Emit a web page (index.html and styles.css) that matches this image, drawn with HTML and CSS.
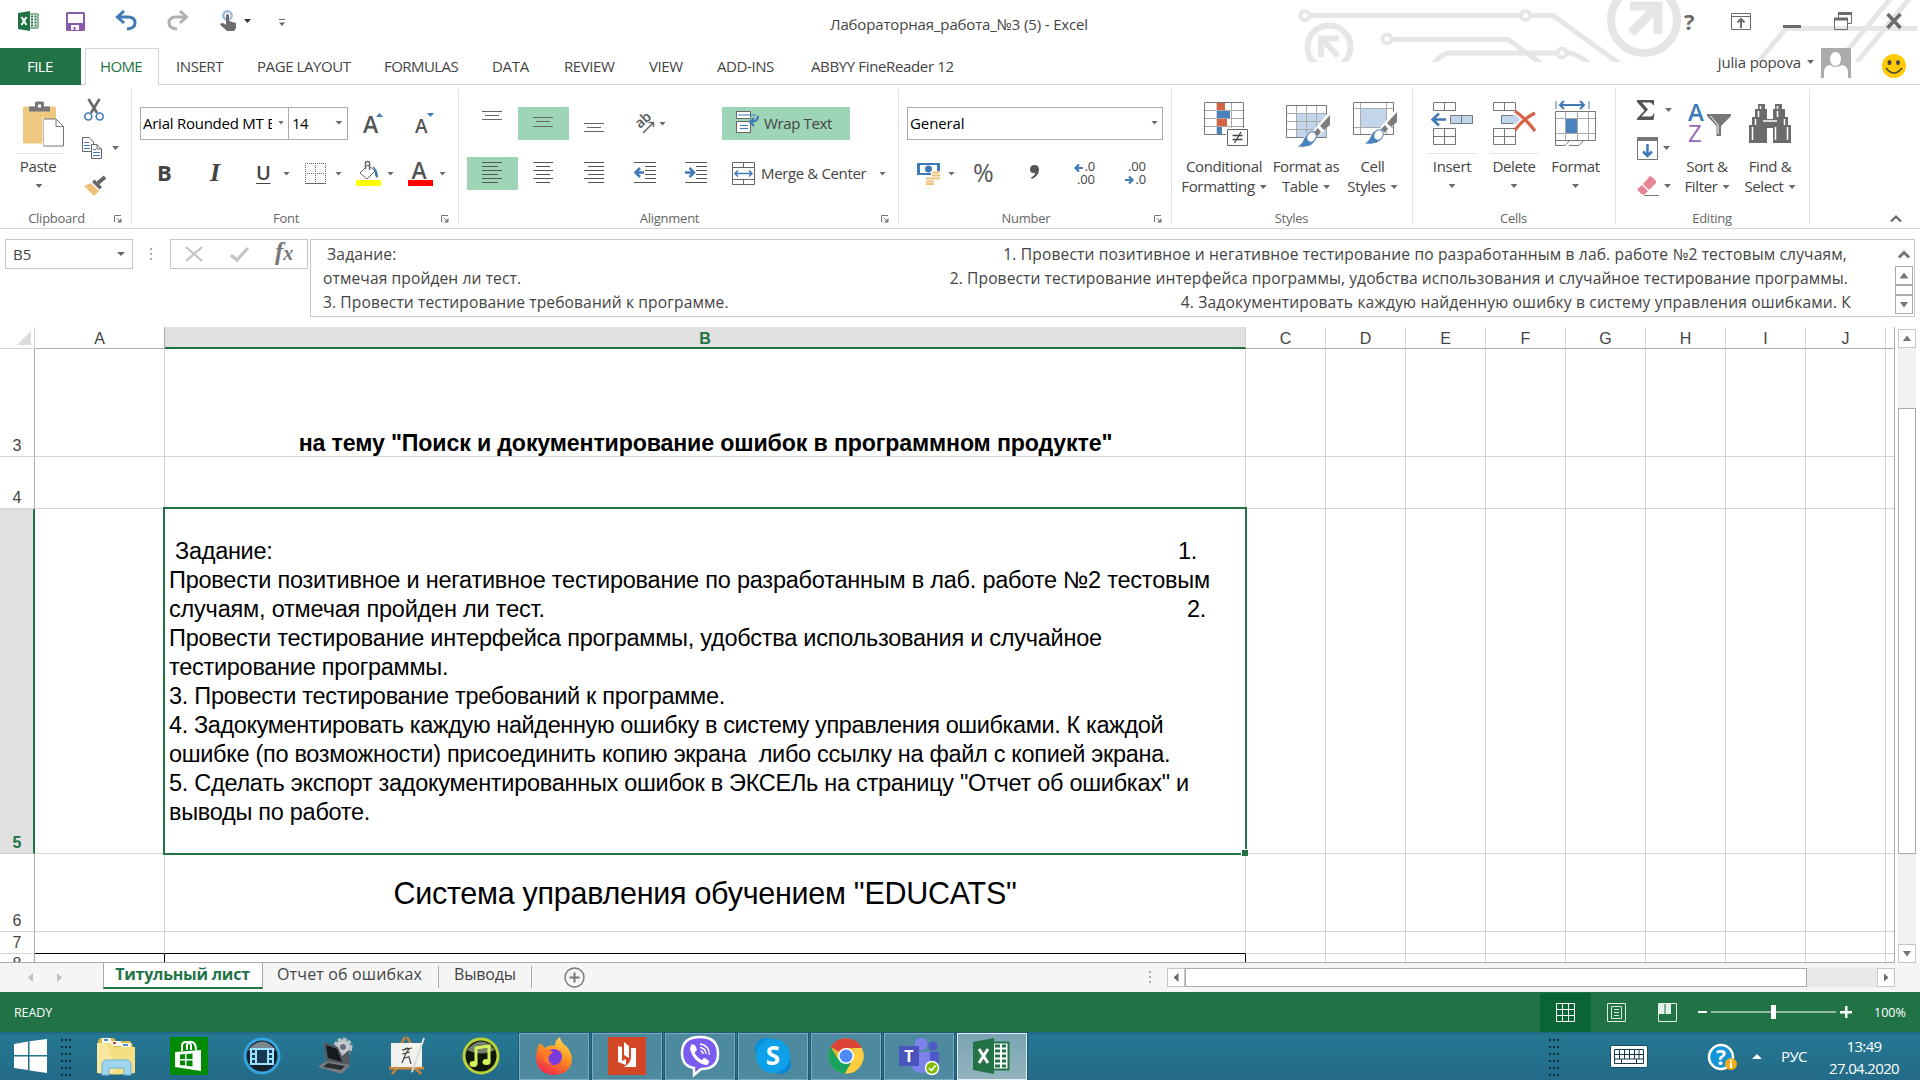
FILE: index.html
```
<!DOCTYPE html>
<html lang="ru">
<head>
<meta charset="utf-8">
<title>Лабораторная_работа_№3 (5) - Excel</title>
<link rel="stylesheet" href="styles.css">
</head>
<body>
<div class="app">

<header class="titlebar">
  <svg class="circuit" width="625" height="62" viewBox="1295 0 625 62" fill="none" stroke="#e6e6e6" stroke-width="5">
    <circle cx="1305" cy="15.500" r="4.500" stroke-width="4"/><path d="M1310 15.500H1520M1531 15.500H1553L1620 64"/>
    <circle cx="1525.500" cy="15.500" r="4.500" stroke-width="4"/>
    <circle cx="1329" cy="47" r="21.500" stroke-width="6"/><path d="M1321 57V38.500H1339M1321 38L1338 56" stroke-width="6"/>
    <circle cx="1387" cy="39" r="4.500" stroke-width="4"/><path d="M1392 39.500H1508L1542 64M1433 64Q1442 53 1450 53H1557M1567 53Q1575 52 1590 64"/>
    <circle cx="1562" cy="53" r="4.500" stroke-width="4"/>
    <circle cx="1644" cy="20" r="33" stroke-width="8"/><path d="M1630 6H1658V34M1657 7L1631 33" stroke-width="9"/>
    <path d="M1758 62L1786 28.500H1917M1891 -2L1846 52M1910 -2L1857 62"/>
  </svg>
  <div class="quick">
    <svg width="20" height="20" viewBox="0 0 20 20"><path d="M11 3h9v14h-9z" fill="#fff" stroke="#217346"/><path d="M13 5.500h2M16.500 5.500h2M13 8.500h2M16.500 8.500h2M13 11.500h2M16.500 11.500h2M13 14.500h2M16.500 14.500h2" stroke="#217346" stroke-width="2"/><path d="M0 2L12 0V20L0 18z" fill="#217346"/><path d="M3.500 6L8.500 14M8.500 6L3.500 14" stroke="#fff" stroke-width="2"/></svg>
    <svg width="19" height="19" viewBox="0 0 19 19"><path d="M0 1.500Q0 0 1.500 0H17.500Q19 0 19 1.500V17.500Q19 19 17.500 19H1.500Q0 19 0 17.500z" fill="#8a5aab"/><path d="M2 2h15v9h-15z" fill="#fff"/><path d="M5 13h8v5h-3.500v-3h-2v3H5z" fill="#fff"/></svg>
    <svg width="22" height="20" viewBox="0 0 22 20" fill="none" stroke="#4079b8" stroke-width="3"><path d="M2 6H13Q20 6 20 12Q20 17.500 12 18"/><path d="M9 0L2.500 6L9 12" stroke-width="3"/></svg>
    <svg width="22" height="20" viewBox="0 0 22 20" fill="none" stroke="#b1b1b1" stroke-width="3"><path d="M20 6H9Q2 6 2 12Q2 17.500 10 18"/><path d="M13 0L19.500 6L13 12"/></svg>
    <svg width="18" height="22" viewBox="0 0 18 22"><circle cx="7.500" cy="5.500" r="4.200" fill="none" stroke="#9dbbdc" stroke-width="2.500"/><path d="M6 5Q7.500 3 9 5V11L16 13V18L14 21H7L0 14.500Q1 12 4 13.500L6 15z" fill="#6b6b6b"/></svg>
    <i class="dd dark"></i>
    <svg width="6" height="7" viewBox="0 0 6 7"><path d="M0 .5h6" stroke="#666"/><path d="M0 3.500h6L3 7z" fill="#666"/></svg>
  </div>
  <div class="doc-title">Лабораторная_работа_№3 (5) - Excel</div>
  <div class="win-buttons">
    <span class="help">?</span>
    <svg width="20" height="17" viewBox="0 0 20 17" fill="none" stroke="#6b6b6b"><path d="M.5.5h19v16H.5zM.5 3.500h19"/><path d="M10 15V6M6.500 9.500L10 6L13.500 9.500" stroke-width="2"/></svg>
    <svg width="18" height="3" viewBox="0 0 18 3"><path d="M0 0h18v3H0z" fill="#6b6b6b"/></svg>
    <svg width="18" height="18" viewBox="0 0 18 18" fill="none" stroke="#6b6b6b"><path d="M4.500 6V1.500H17.500V11.500H13.500M.5 6.500h13v11H.5z"/><path d="M4 1.500h14M0 7h14" stroke-width="3"/></svg>
    <svg width="16" height="16" viewBox="0 0 16 16" stroke="#6b6b6b" stroke-width="3.500"><path d="M1.500 1L14.500 15M14.500 1L1.500 15"/></svg>
  </div>
</header>

<nav class="tabs">
  <span class="tab file">FILE</span>
  <span class="tab active">HOME</span>
  <span class="tab t-insert">INSERT</span>
  <span class="tab t-page">PAGE LAYOUT</span>
  <span class="tab t-form">FORMULAS</span>
  <span class="tab t-data">DATA</span>
  <span class="tab t-rev">REVIEW</span>
  <span class="tab t-view">VIEW</span>
  <span class="tab t-add">ADD-INS</span>
  <span class="tab t-abbyy">ABBYY FineReader 12</span>
  <div class="account">
    <span>julia popova</span><i class="dd"></i>
    <svg width="30" height="30" viewBox="0 0 30 30"><path d="M0 0h30v30H0z" fill="#ababab"/><path d="M3 30V24Q3 18 9 17Q12 19 15 19Q18 19 21 17Q27 18 27 24V30z" fill="#fff"/><ellipse cx="14.500" cy="11" rx="6" ry="7.500" fill="#fff" stroke="#ababab"/></svg>
    <svg class="smile" width="24" height="24" viewBox="0 0 24 24"><circle cx="12" cy="12" r="12" fill="#ffcb05"/><ellipse cx="7.500" cy="8.500" rx="2" ry="2.500" fill="#444"/><ellipse cx="16" cy="8.500" rx="2" ry="2.500" fill="#444"/><path d="M4 14Q12 24 20 14" fill="none" stroke="#444" stroke-width="1.500"/></svg>
  </div>
</nav>

<section class="ribbon">
  <div class="group g-clip">
    <div class="body">
      <div class="big paste">
        <svg width="41" height="45" viewBox="0 0 41 45"><rect y="5" width="33" height="37" rx="1.500" fill="#edc87e"/><path d="M6 5H12V1.500Q12 0 13.500 0H19.500Q21 0 21 1.500V5H27V10H6z" fill="#777"/><path d="M15 3h3v3h-3z" fill="#fff"/><path d="M20.500 17.500H33L40.500 25V44.500H20.500z" fill="#fff" stroke="#777"/><path d="M19 16h1v29" stroke="#fff" fill="none"/><path d="M33 17.500V25H40.500" fill="none" stroke="#777"/></svg>
        <hr><span>Paste</span><i class="dd"></i>
      </div>
      <div class="tri-rows">
        <div><svg width="20" height="22" viewBox="0 0 20 22"><path d="M4.500 0L13 14M15.500 0L7 14" stroke="#666" stroke-width="2.500"/><circle cx="4.300" cy="17.500" r="3.500" fill="#fff" stroke="#4079b8" stroke-width="1.600"/><circle cx="15.700" cy="17.500" r="3.500" fill="#fff" stroke="#4079b8" stroke-width="1.600"/></svg></div>
        <div class="copy"><svg width="20" height="22" viewBox="0 0 20 22" fill="#fff" stroke="#666"><path d="M.5.5H7L11.500 5V14.500H.5z"/><path d="M2 5.500h5M2 8.500h6M2 11.500h6" stroke="#4079b8"/><path d="M9.500 7.500H15L19.500 12V21.500H9.500zM15 7.500V12H19.500"/><path d="M11 12.500h3M11 15.500h7M11 18.500h7" stroke="#4079b8"/></svg><i class="dd"></i></div>
        <div><svg width="23" height="20" viewBox="0 0 23 20"><path d="M0 10L7 7L15 15L10 20z" fill="#edc17c"/><path d="M8 6L10.500 3.500L18 11L15.500 13.500z" fill="#666"/><path d="M14 7L21 1" stroke="#666" stroke-width="4"/></svg></div>
      </div>
    </div>
    <div class="label"><span class="lt">Clipboard</span><svg class="launch" width="8" height="8" viewBox="0 0 8 8"><path d="M.5 7V.5H7M3 3L6 6" fill="none" stroke="#777"/><path d="M7.500 3v4.500H3z" fill="#777"/></svg></div>
  </div>

  <div class="group g-font">
    <div class="body rows">
      <div class="row1">
        <div class="combo c-name"><span class="fn">Arial Rounded MT Bold</span><i class="dd"></i></div>
        <div class="combo c-size"><span>14</span><i class="dd"></i></div>
        <svg width="20" height="22" viewBox="0 0 20 22"><text x="0" y="20" class="glyph" font-size="23">A</text><path d="M13 4L16.500 0L20 4z" fill="#4079b8"/></svg>
        <svg width="20" height="22" viewBox="0 0 20 22"><text x="0" y="20" class="glyph" font-size="19">A</text><path d="M12 0H19L15.500 4z" fill="#4079b8"/></svg>
      </div>
      <div class="row2">
        <b class="fb">B</b><i class="fi">I</i><span class="fu">U</span><i class="dd"></i>
        <svg width="22" height="22" viewBox="0 0 22 22" stroke="#666" fill="none"><path d="M.5 0V20M10.500 0V20M20.500 0V20M0 .5H21M0 10.500H21" stroke-dasharray="1 1"/><path d="M0 20.500h21"/></svg><i class="dd"></i>
        <svg width="25" height="25" viewBox="0 0 25 25"><path d="M4 12L12 4L19 10L11 18z" fill="#fff" stroke="#666"/><path d="M9.500 8V1.500Q9.500.5 11 .5H12Q13.500.5 13.500 2V9" fill="none" stroke="#666" stroke-width="1.500"/><path d="M16 5Q22 7 22 17Q18 16 19 10z" fill="#4079b8"/><path d="M0 19h25v6H0z" fill="#ff0"/></svg><i class="dd"></i>
        <svg width="25" height="25" viewBox="0 0 25 25"><text x="3.500" y="18" class="glyph" font-size="23">A</text><path d="M0 19h25v6H0z" fill="red"/></svg><i class="dd"></i>
      </div>
    </div>
    <div class="label"><span class="lt">Font</span><svg class="launch" width="8" height="8" viewBox="0 0 8 8"><path d="M.5 7V.5H7M3 3L6 6" fill="none" stroke="#777"/><path d="M7.500 3v4.500H3z" fill="#777"/></svg></div>
  </div>

  <div class="group g-align">
    <div class="body rows">
      <div class="row1">
        <span class="tg"><svg width="20" height="28" viewBox="0 0 20 28" stroke="#666"><path d="M0 2.500h20M3 6.500h14M0 10.500h20"/></svg></span>
        <span class="tg on"><svg width="20" height="28" viewBox="0 0 20 28" stroke="#666"><path d="M0 8.500h20M3 12.500h14M0 17.500h20"/></svg></span>
        <span class="tg"><svg width="20" height="28" viewBox="0 0 20 28" stroke="#666"><path d="M0 14.500h20M3 18.500h14M0 22.500h20"/></svg></span>
        <svg class="orient" width="20" height="20" viewBox="0 0 20 20"><text transform="translate(5 15) rotate(-42)" class="glyph" font-size="14">ab</text><path d="M8 19L18 9M13.500 8.500H18.500V13" fill="none" stroke="#666" stroke-width="1.500"/></svg><i class="dd"></i>
        <span class="wrap"><svg width="23" height="23" viewBox="0 0 23 23"><path d="M.5.5h14v7H.5zM.5 10.500h14v11H.5z" fill="#fff" stroke="#666"/><path d="M2 4H20M4 14.500h8M4 17.500h8" stroke="#4079b8"/><path d="M22 5Q22 11 14 11M18 7L14 11L18 15" fill="none" stroke="#4079b8" stroke-width="2.200"/></svg>Wrap Text</span>
      </div>
      <div class="row2">
        <span class="tg on"><svg width="20" height="22" viewBox="0 0 20 22" stroke="#555"><path d="M0 .5h20M0 4.500h16M0 8.500h20M0 12.500h16M0 16.500h20M0 20.500h16"/></svg></span>
        <span class="tg"><svg width="20" height="22" viewBox="0 0 20 22" stroke="#555"><path d="M0 .5h20M3 4.500h14M0 8.500h20M3 12.500h14M0 16.500h20M3 20.500h14"/></svg></span>
        <span class="tg"><svg width="20" height="22" viewBox="0 0 20 22" stroke="#555"><path d="M0 .5h20M4 4.500h16M0 8.500h20M4 12.500h16M0 16.500h20M4 20.500h16"/></svg></span>
        <span class="tg"><svg width="22" height="22" viewBox="0 0 22 22" stroke="#555"><path d="M0 .5h22M11 4.500h11M11 8.500h11M11 12.500h11M11 16.500h11M0 20.500h22"/><path d="M10 10.500H2M6 6L1.500 10.500L6 15" stroke="#4079b8" stroke-width="2.500" fill="none"/></svg></span>
        <span class="tg"><svg width="22" height="22" viewBox="0 0 22 22" stroke="#555"><path d="M0 .5h22M11 4.500h11M11 8.500h11M11 12.500h11M11 16.500h11M0 20.500h22"/><path d="M0 10.500H8M4.500 6L9 10.500L4.500 15" stroke="#4079b8" stroke-width="2.500" fill="none"/></svg></span>
        <svg class="merge" width="23" height="23" viewBox="0 0 23 23" fill="#fff" stroke="#666"><path d="M.5.500h22v22H.5zM.5 5.500h22M.5 17.500h22M11.500.500v5M11.500 17.500v5"/><path d="M3 11.500H20M6 8.500L3 11.500L6 14.500M17 8.500L20 11.500L17 14.500" fill="none" stroke="#4079b8" stroke-width="1.500"/></svg>
        <span>Merge &amp; Center</span><i class="dd"></i>
      </div>
    </div>
    <div class="label"><span class="lt">Alignment</span><svg class="launch" width="8" height="8" viewBox="0 0 8 8"><path d="M.5 7V.5H7M3 3L6 6" fill="none" stroke="#777"/><path d="M7.500 3v4.500H3z" fill="#777"/></svg></div>
  </div>

  <div class="group g-num">
    <div class="body rows">
      <div class="row1"><div class="combo c-num"><span>General</span><i class="dd"></i></div></div>
      <div class="row2">
        <svg width="23" height="23" viewBox="0 0 23 23"><path d="M0 1h23v12H0z" fill="#4079b8"/><path d="M3 3h17v8H3z" fill="#fff"/><circle cx="11.500" cy="7" r="3.500" fill="#4079b8"/><path d="M14 9h9v9h-6v5H8v-8h6z" fill="#fff"/><path d="M15 10.500h8M15 13.500h8M15 16.500h8M9 16.500h8M9 19.500h8M9 22h8" stroke="#edc17c" stroke-width="2"/></svg><i class="dd"></i>
        <svg width="22" height="22" viewBox="0 0 22 22"><text x="0" y="19" class="glyph pct" font-size="25">%</text></svg>
        <svg width="9" height="14" viewBox="0 0 9 14"><path d="M4.500 0Q9 0 9 5Q8.500 11 2 14L1 12.500Q5 10.500 5 8Q0 8.500 0 4.500Q0 0 4.500 0z" fill="#555"/></svg>
        <svg width="23" height="23" viewBox="0 0 23 23"><text x="10.500" y="9" class="dec">.0</text><text x="3" y="22" class="dec">.00</text><path d="M9 6H2M5 2.500L1.500 6L5 9.500" fill="none" stroke="#4079b8" stroke-width="2.200"/></svg>
        <svg width="23" height="23" viewBox="0 0 23 23"><text x="3" y="9" class="dec">.00</text><text x="10.500" y="22" class="dec">.0</text><path d="M0 18H7M4 14.500L7.500 18L4 21.500" fill="none" stroke="#4079b8" stroke-width="2.200"/></svg>
      </div>
    </div>
    <div class="label"><span class="lt">Number</span><svg class="launch" width="8" height="8" viewBox="0 0 8 8"><path d="M.5 7V.5H7M3 3L6 6" fill="none" stroke="#777"/><path d="M7.500 3v4.500H3z" fill="#777"/></svg></div>
  </div>

  <div class="group g-styles">
    <div class="body">
      <div class="big w-cond"><svg width="44" height="44" viewBox="0 0 44 44"><path d="M.5.500h39v32H.5z" fill="#fff" stroke="#777"/><path d="M13 1V32M27.500 1V32M1 8.500H39M1 16.500H39M1 24.500H39" stroke="#aaa"/><path d="M13 1h8v7h-8zM13 17h10v7H13z" fill="#d86344"/><path d="M13 9h13v7H13zM13 25h5v7h-5z" fill="#4a82bd"/><path d="M22 26h22v18H22z" fill="#fff"/><path d="M23.500 27.500h20v16h-20z" fill="#fff" stroke="#666"/><path d="M28.500 33.500h10M28.500 37.500h10M37 30L30.500 41" stroke="#444" stroke-width="1.300"/></svg><hr class="none"><span>Conditional</span><span>Formatting<i class="dd"></i></span></div>
      <div class="big w-fmt"><svg width="44" height="44" viewBox="0 0 44 44"><path d="M.5 3.500h40v32H.5z" fill="#fff" stroke="#777"/><path d="M10.500 12h30v23h-30z" fill="#c3d5ea"/><path d="M10.500 4V35M20.500 4V35M30.500 4V35M1 11.500H40M1 19.500H40M1 27.500H40" stroke="#aaa"/><path d="M44 9L27 29L33 34L44 22z" fill="#fff"/><path d="M44 13V23L38 28L34 24z" fill="#7d7d7d"/><path d="M32 26L35 30L32 34L28 30z" fill="#7d7d7d"/><path d="M11 45Q17 41 18 36Q21 29 28 34Q31 40 24 44Q18 46 11 45z" fill="#4a82bd" stroke="#fff"/><ellipse cx="25.500" cy="35" rx="4.500" ry="5.500" fill="#fff" stroke="#4a82bd" transform="rotate(30 25.500 35)"/></svg><hr class="none"><span>Format as</span><span>Table<i class="dd"></i></span></div>
      <div class="big w-cell"><svg width="44" height="44" viewBox="0 0 44 44"><path d="M.5.500h40v32H.5z" fill="#fff" stroke="#777"/><path d="M8 7h25v18H8z" fill="#c3d5ea"/><path d="M7.500 1V32M33.500 1V32M1 6.500H40M1 25.500H40" stroke="#aaa"/><path d="M44 6L27 26L33 31L44 19z" fill="#fff"/><path d="M44 10V20L38 25L34 21z" fill="#7d7d7d"/><path d="M32 23L35 27L32 31L28 27z" fill="#7d7d7d"/><path d="M11 42Q17 38 18 33Q21 26 28 31Q31 37 24 41Q18 43 11 42z" fill="#4a82bd" stroke="#fff"/><ellipse cx="25.500" cy="33" rx="4.500" ry="5.500" fill="#fff" stroke="#4a82bd" transform="rotate(30 25.500 33)"/></svg><hr class="none"><span>Cell</span><span>Styles<i class="dd"></i></span></div>
    </div>
    <div class="label"><span class="lt">Styles</span></div>
  </div>

  <div class="group g-cells">
    <div class="body">
      <div class="big w-ins"><svg width="44" height="44" viewBox="0 0 44 44" fill="#fff" stroke="#777"><path d="M3.500.500h22v8h-22zM14.500.500v8M3.500 26.500h22v16h-22zM14.500 26.500v16M3.500 34.500h22"/><path d="M20.500 13.500h22v8h-22zM31.500 13.500v8" fill="#c3d5ea"/><path d="M16 17.500H2M9 11.500L2.500 17.500L9 23.500" stroke="#4079b8" stroke-width="2.500" fill="none"/></svg><hr><span>Insert</span><i class="dd"></i></div>
      <div class="big w-del"><svg width="44" height="44" viewBox="0 0 44 44" fill="#fff" stroke="#777"><path d="M1.500.500h22v8h-22zM12.500.500v8M1.500 26.500h22v16h-22zM12.500 26.500v16M1.500 34.500h22"/><path d="M9.500 13.500h12v8h-12z" fill="#c3d5ea"/><path d="M21 13h3l4 4.500l-4 4.500h-3z" fill="#c3d5ea" stroke="none"/><path d="M23 9Q34 17 43 29M43 11Q31 17 23 28" stroke="#d86344" stroke-width="3.200" fill="none"/></svg><hr><span>Delete</span><i class="dd"></i></div>
      <div class="big w-form"><svg width="42" height="46" viewBox="0 0 42 46" fill="#fff" stroke="#777"><path d="M.5 11.500h40v29H.5z"/><path d="M10.500 12V40M22.500 12V40M33.500 12V40M1 18.500H40M1 33.500H40" stroke="#aaa"/><path d="M11 19h11v14H11z" fill="#4a82bd" stroke="none"/><path d="M.5 41V45.500H10L14 41M14 45.500H24L28 41" fill="none"/><path d="M1 1v8M34 1v8" stroke="#4079b8"/><path d="M5 5H29M9 1L5 5L9 9M25 1L29 5L25 9" fill="none" stroke="#4079b8" stroke-width="2"/></svg><hr class="none"><span>Format</span><i class="dd"></i></div>
    </div>
    <div class="label"><span class="lt">Cells</span></div>
  </div>

  <div class="group g-edit">
    <div class="body">
      <div class="tri-rows edit">
        <div><svg width="18" height="20" viewBox="0 0 18 20"><path d="M0 0H17V5H16Q15 2.500 13 2.500H5L11 9.500L4.500 16.500H13Q16 16.500 16.500 13.500H17.500L16.500 20H0V18.500L7.500 10.500L0 2z" fill="#555"/></svg><i class="dd sum"></i></div>
        <div><svg width="21" height="23" viewBox="0 0 21 23"><path d="M.5.500h20v22H.5z" fill="#fff" stroke="#777"/><path d="M0 0h21v4H0z" fill="#777"/><path d="M10.500 7V19M6 14.500L10.500 19L15 14.500" fill="none" stroke="#4079b8" stroke-width="2.500"/></svg><i class="dd"></i></div>
        <div><svg width="22" height="20" viewBox="0 0 22 20"><path d="M6 8L13 0Q14 0 19 5V7L12 14z" fill="#e58597"/><path d="M5 9L11 15L7.500 18.500H5L0 13.500z" fill="#e58597"/><path d="M7 19.500h15" stroke="#777"/></svg><i class="dd"></i></div>
      </div>
      <div class="big w-sort"><svg width="44" height="40" viewBox="0 0 44 40"><text x="0" y="17" class="az a" font-size="24">A</text><text x="0" y="38" class="az z" font-size="24">Z</text><path d="M19 10H43V12L33 22V32H28.500V22L19 12z" fill="#777"/><path d="M22.500 12L30 21V30" stroke="#fff" fill="none"/></svg><hr class="none"><span>Sort &amp;</span><span>Filter<i class="dd"></i></span></div>
      <div class="big w-find"><svg width="42" height="40" viewBox="0 0 42 40"><path d="M9 0H16V5H18V15H24V5H26V0H33V5H36V13H39V21H42V39H24V24H18V39H0V21H3V13H6V5H9z" fill="#6b6b6b"/><path d="M9.500 7V13M6.500 15V21M3.500 23V36M11.500 2V5M28.500 2V5M28.500 7V13M26.500 23V36M38.500 23V36M35.500 15V21M14 17h14" stroke="#fff" stroke-width="1.500"/></svg><hr class="none"><span>Find &amp;</span><span>Select<i class="dd"></i></span></div>
    </div>
    <div class="label"><span class="lt">Editing</span></div>
  </div>
  <svg class="collapse" width="12" height="9" viewBox="0 0 12 9"><path d="M1 7.500L6 2.500L11 7.500" fill="none" stroke="#666" stroke-width="2.200"/></svg>
</section>

<section class="formula">
  <div class="namebox"><span>B5</span><i class="dd"></i></div>
  <svg class="vdots" width="2" height="12" viewBox="0 0 2 12"><path d="M0 0h2v2H0zM0 5h2v2H0zM0 10h2v2H0z" fill="#aaa"/></svg>
  <div class="fxbox">
    <svg width="18" height="16" viewBox="0 0 18 16"><path d="M1 1L17 15M17 1L1 15" stroke="#c4c4c4" stroke-width="2.200"/></svg>
    <svg width="19" height="15" viewBox="0 0 19 15"><path d="M1 8L7 13L18 1" fill="none" stroke="#c4c4c4" stroke-width="3.200"/></svg>
    <span class="fx"><em>f</em><em class="x">x</em></span>
  </div>
  <div class="fbox">
    <div class="ftext">
      <p><span class="f0">Задание:</span><span class="f1">1. Провести позитивное и негативное тестирование по разработанным в лаб. работе №2 тестовым случаям,</span></p>
      <p><span>отмечая пройден ли тест.</span><span class="f2">2. Провести тестирование интерфейса программы, удобства использования и случайное тестирование программы.</span></p>
      <p><span>3. Провести тестирование требований к программе.</span><span class="f3">4. Задокументировать каждую найденную ошибку в систему управления ошибками. К</span></p>
    </div>
    <div class="fside">
      <svg width="12" height="9" viewBox="0 0 12 9"><path d="M1 7.500L6 2.500L11 7.500" fill="none" stroke="#777" stroke-width="3"/></svg>
      <div class="mini"><span><i class="up"></i></span><span class="th"></span><span><i class="down"></i></span></div>
    </div>
  </div>
</section>

<main class="sheet">
  <div class="grid">
    <div class="r head"><b class="corner"><svg width="14" height="14" viewBox="0 0 14 14"><path d="M14 0V14H0z" fill="#dcdcdc"/></svg></b><i>A</i><i class="sel">B</i><i>C</i><i>D</i><i>E</i><i>F</i><i>G</i><i>H</i><i>I</i><i>J</i><i></i></div>
    <div class="r r3"><b>3</b><i></i><i class="title">на тему "Поиск и документирование ошибок в программном продукте"</i><i></i><i></i><i></i><i></i><i></i><i></i><i></i><i></i><i></i></div>
    <div class="r r4"><b>4</b><i></i><i></i><i></i><i></i><i></i><i></i><i></i><i></i><i></i><i></i><i></i></div>
    <div class="r r5"><b class="sel">5</b><i></i><div class="cell task">
      <p class="ind"><span>Задание:</span><span class="n1">1.</span></p>
      <p class="l1">Провести позитивное и негативное тестирование по разработанным в лаб. работе №2 тестовым</p>
      <p class="l3"><span>случаям, отмечая пройден ли тест.</span><span class="n2">2.</span></p>
      <p class="l4">Провести тестирование интерфейса программы, удобства использования и случайное</p>
      <p>тестирование программы.</p>
      <p>3. Провести тестирование требований к программе.</p>
      <p class="l2">4. Задокументировать каждую найденную ошибку в систему управления ошибками. К каждой</p>
      <p class="l5">ошибке (по возможности) присоединить копию экрана&nbsp; либо ссылку на файл с копией экрана.</p>
      <p>5. Сделать экспорт задокументированных ошибок в ЭКСЕЛь на страницу "Отчет об ошибках" и</p>
      <p>выводы по работе.</p>
      <div class="selection"></div><div class="handle"></div>
    </div><i></i><i></i><i></i><i></i><i></i><i></i><i></i><i></i><i></i></div>
    <div class="r r6"><b>6</b><i></i><i class="sys">Система управления обучением "EDUCATS"</i><i></i><i></i><i></i><i></i><i></i><i></i><i></i><i></i><i></i></div>
    <div class="r r7"><b>7</b><i class="bk"></i><i class="bk"></i><i></i><i></i><i></i><i></i><i></i><i></i><i></i><i></i><i></i></div>
    <div class="r r8"><b>8</b><i class="bkr"></i><i class="bkr"></i><i></i><i></i><i></i><i></i><i></i><i></i><i></i><i></i><i></i></div>
  </div>
  <div class="vscroll"><span class="btn"><i class="up"></i></span><span class="vthumb"></span><span class="btn"><i class="down"></i></span></div>
</main>

<div class="sheetbar">
  <div class="nav"><i class="left"></i><i class="right"></i></div>
  <span class="st on">Титульный лист</span>
  <span class="st s2">Отчет об ошибках</span>
  <span class="st s3">Выводы</span>
  <svg class="plus" width="21" height="21" viewBox="0 0 21 21" fill="none" stroke="#777"><circle cx="10.500" cy="10.500" r="9.500" stroke-width="1.400"/><path d="M10.500 5.500v10M5.500 10.500h10" stroke-width="2"/></svg>
  <svg class="vdots hd" width="2" height="12" viewBox="0 0 2 12"><path d="M0 0h2v2H0zM0 5h2v2H0zM0 10h2v2H0z" fill="#aaa"/></svg>
  <div class="hscroll"><span class="btn"><i class="left"></i></span><span class="hthumb"></span><span class="btn"><i class="right"></i></span></div>
</div>

<footer class="status">
  <span class="ready">READY</span>
  <div class="views">
    <span class="v on"><svg width="19" height="19" viewBox="0 0 19 19" fill="none" stroke="#fff"><path d="M.5.500h18v18H.5zM6.500.500v18M12.500.500v18M.5 6.500h18M.5 12.500h18"/></svg></span>
    <span class="v"><svg width="19" height="19" viewBox="0 0 19 19" fill="none" stroke="#dfece4"><path d="M.5.500h18v18H.5zM4.500 3.500h10v12h-10zM7 6.500h5M7 9.500h5M7 12.500h5"/></svg></span>
    <span class="v"><svg width="19" height="19" viewBox="0 0 19 19" fill="none" stroke="#e4f0e8"><path d="M.5.500h18v18H.5z"/><path d="M1 1h5.500v10H1zM7.500 1H13v10H7.500z" fill="#e4f0e8" stroke="none"/></svg></span>
  </div>
  <svg class="zoom" width="155" height="14" viewBox="0 0 155 14"><path d="M0 6h9v2H0zM13 6.500h125v1H13zM73 0h5v14h-5zM142 6h12v2.500h-12zM147 1h2.500v12h-2.500z" fill="#fff"/></svg>
  <span class="pc">100%</span>
</footer>

<footer class="taskbar">
  <svg class="start" width="33" height="34" viewBox="0 0 33 34"><path d="M0 5L14 2.500V16H0zM15.500 2.300L33 0V16H15.500zM0 17.500H14V31L0 29zM15.500 17.500H33V34L15.500 31.500z" fill="#fff"/></svg>
  <span class="grip"></span>
  <div class="apps">
    <span class="app"><svg width="40" height="38" viewBox="0 0 40 38"><path d="M4 1h14l2 3h14l3 4v28H2V4z" fill="#d8b648"/><path d="M6 1h9v5H6zM15 4h10v5H15zM25 6h10v5H25z" fill="#f8f8f0"/><path d="M8 2h4v2H8zM27 7h5v2h-5z" fill="#4a90c0"/><path d="M17 5h3v2h-3z" fill="#d04a3a"/><path d="M1 6h14l3 4h21v26Q20 39 1 36z" fill="#f4df83"/><path d="M1 6h10L20 36H1z" fill="#fbf0b4" opacity=".6"/><path d="M6 38V28Q6 23 10 23H31Q35 23 35 28V38H28V31H13V38z" fill="#9fd5ef" stroke="#6fb5d8"/></svg></span>
    <span class="app"><svg width="38" height="38" viewBox="0 0 38 38"><path d="M0 0h38v38H0z" fill="#008a00"/><path d="M12 14V9Q12 5 16 5Q21 5 21 9V13M17 13V8Q18 4 22 5Q26 6 26 13" fill="none" stroke="#fff" stroke-width="2"/><path d="M5 15L31 13V34L5 30z" fill="#fff"/><path d="M10 17.500l5-.5v5h-5zM16.500 17l6-.5V22h-6zM10 23.500h5v5l-5-.5zM16.500 23.500h6v6l-6-.7z" fill="#008a00"/></svg></span>
    <span class="app"><svg width="38" height="38" viewBox="0 0 38 38"><circle cx="19" cy="19" r="17" fill="#15212c" stroke="#35a5e0" stroke-width="3"/><path d="M5 13Q19 -4 33 13Q19 20 5 13z" fill="#7b8790"/><path d="M8 12h22v15H8z" fill="#173a52" stroke="#9be2ff" stroke-width="2"/><path d="M13 12v15M25 12v15M8 17h5M8 22h5M25 17h5M25 22h5" stroke="#9be2ff" stroke-width="2"/></svg></span>
    <span class="app"><svg width="38" height="38" viewBox="0 0 38 38"><circle cx="27" cy="10" r="7.500" fill="#c6ccd2" stroke="#b9c0c6" stroke-width="4" stroke-dasharray="3.500 1.500"/><circle cx="27" cy="10" r="3" fill="#66727c"/><path d="M8 5L22 10L26 19L33 13L34 28L10 24z" fill="#54595d"/><path d="M10 8L21 12L26 25L12 21z" fill="#16191c"/><path d="M2 30L10 24L34 28L26 37z" fill="#777c80"/><path d="M7 30L12 26L29 29L25 33z" fill="#2a2d30"/></svg></span>
    <span class="app"><svg width="38" height="38" viewBox="0 0 38 38"><path d="M16 0L12 7M18 0L22 7M8 31L3 37M26 31L32 37" stroke="#c98436" stroke-width="2.500"/><path d="M2 6H33V30H2z" fill="#f2f2ef"/><path d="M0 30h35v2.500H0z" fill="#d08a3c"/><path d="M15 13Q18 10 20 12L17 16L15 21L20 20L22 27M13 17L21 15M15 21L13 26M13 13L23 11" stroke="#444" stroke-width="1.200" fill="none"/><path d="M35 1L23 35" stroke="#dcdcdc" stroke-width="2"/><path d="M25 28l-4 9 5-6z" fill="#c8ccd0"/></svg></span>
    <span class="app"><svg width="38" height="38" viewBox="0 0 38 38"><circle cx="19" cy="19" r="17" fill="#10160a" stroke="#b9d336" stroke-width="3"/><path d="M5 13Q19 -4 33 13Q19 20 5 13z" fill="#77806c"/><path d="M14 27V11L27 9V25" fill="none" stroke="#d5f25a" stroke-width="3"/><ellipse cx="11.500" cy="27" rx="4" ry="3" fill="#d5f25a"/><ellipse cx="24.500" cy="25" rx="4" ry="3" fill="#d5f25a"/></svg></span>
    <span class="app run"><svg width="38" height="38" viewBox="0 0 38 38"><defs><linearGradient id="ff" x1=".8" y1="0" x2=".3" y2="1"><stop offset="0" stop-color="#ffe14a"/><stop offset=".5" stop-color="#ff8a1e"/><stop offset="1" stop-color="#f0264f"/></linearGradient></defs><path d="M5 6L10 11Q15 7 20 9Q20 3 25 0Q26 6 31 9Q36 13 37 22Q36 37 19 38Q2 37 1 21Q1 13 5 6z" fill="url(#ff)"/><circle cx="19" cy="20" r="8" fill="#7a3bdc"/><path d="M8 14Q13 12 18 15L14 19Q12 24 17 27Q10 27 8 21z" fill="#ff7a24"/></svg></span>
    <span class="app run"><svg width="38" height="38" viewBox="0 0 38 38"><path d="M0 0h38v38H0z" fill="#d24726"/><path d="M10 9L14 10V24L18 22V28L10 25zM16 5L21 9V21L16 18zM23 11H28V30H16Q23 26 23 20z" fill="#fff"/></svg></span>
    <span class="app run"><svg width="38" height="40" viewBox="0 0 38 40"><path d="M19 1Q37 1 37 18Q37 33 20 33L13 39V32Q1 30 1 17Q1 1 19 1z" fill="#7a5cf0" stroke="#fff" stroke-width="2.500"/><path d="M10 9Q13 7 15 11L16 14L13.500 16.500Q16 22 21 24L23 22Q25 22 28 25Q28 29 25 29Q13 27 9 13z" fill="#fff"/><path d="M19 8Q28 9 28.500 19M19 11.500Q24.500 12 25 18M19.500 15Q22 15 22 18" fill="none" stroke="#fff" stroke-width="1.300"/></svg></span>
    <span class="app run"><svg width="38" height="38" viewBox="0 0 38 38"><circle cx="12" cy="12" r="11" fill="#0a8fdc"/><circle cx="27" cy="27" r="10" fill="#0a84d6"/><circle cx="19" cy="19" r="17" fill="#0ea0e8"/><text x="19" y="28" text-anchor="middle" class="logo" font-size="26">S</text></svg></span>
    <span class="app run"><svg width="36" height="38" viewBox="0 0 38 38"><circle cx="19" cy="19" r="18.500" fill="#e8b92e"/><path d="M19 19L3 9.500A18.500 18.500 0 0 1 35.500 10.500H19z" fill="#db4437"/><path d="M3 9.500A18.500 18.500 0 0 0 18 37.500L26 23L11 23z" fill="#1aa260"/><path d="M35.500 10.500A18.500 18.500 0 0 1 18 37.500L27 22V10.500z" fill="#ffcd40"/><circle cx="19" cy="19" r="8.500" fill="#fff"/><circle cx="19" cy="19" r="6.800" fill="#4c8bf5"/></svg></span>
    <span class="app run"><svg width="40" height="38" viewBox="0 0 40 38"><circle cx="22" cy="7" r="6.500" fill="#7b83eb"/><circle cx="34" cy="9" r="4.500" fill="#5059c9"/><path d="M27 15H40V26Q39 32 32 31z" fill="#5059c9"/><path d="M12 15H31V29Q29 36 22 36Q13 35 12 27z" fill="#7b83eb"/><path d="M0 9h20v20H0z" fill="#4b53bc"/><text x="10" y="25" text-anchor="middle" class="logo" font-size="16">T</text><circle cx="33" cy="31" r="6.500" fill="#7fba00" stroke="#fff" stroke-width="1.500"/><path d="M30 31l2.500 2.500L36.500 28.500" fill="none" stroke="#fff" stroke-width="1.700"/></svg></span>
    <span class="app run cur"><svg width="37" height="36" viewBox="0 0 37 36"><path d="M20 4.500h15.500v27H20z" fill="#fff" stroke="#217346" stroke-width="2"/><path d="M22 8h5M29 8h4M22 13h5M29 13h4M22 18h5M29 18h4M22 23h5M29 23h4M22 28h5M29 28h4" stroke="#217346" stroke-width="3"/><path d="M0 4L21 0V36L0 32z" fill="#217346"/><path d="M6 11L15 25M15 11L6 25" stroke="#fff" stroke-width="3"/></svg></span>
  </div>
  <span class="grip g2"></span>
  <svg class="kbd" width="38" height="23" viewBox="0 0 38 23"><rect x=".5" y=".5" width="37" height="22" rx="1.500" fill="#fff" stroke="#174d62"/><path d="M4.500 4.500h29v14h-29zM4.500 9.500h29M4.500 14h29M9.500 4.500v9.500M14.500 4.500v9.500M19.500 4.500v9.500M24.500 4.500v9.500M29 4.500v9.500M11.500 14v4.500M26.500 14v4.500" fill="none" stroke="#17394a"/></svg>
  <svg class="qm" width="30" height="28" viewBox="0 0 30 28"><circle cx="13" cy="13" r="12" fill="#1595d5" stroke="#fff" stroke-width="2.500"/><text x="13" y="20.500" text-anchor="middle" class="logo" font-size="21">?</text><circle cx="23" cy="20" r="6" fill="#f5ab14"/><path d="M22 15.500h2v2h-2zM22 18.500h2v5.500h-2z" fill="#fff"/></svg>
  <i class="traytri"></i>
  <span class="lang">РУС</span>
  <div class="clock"><span class="hm">13:49</span><span>27.04.2020</span></div>
</footer>
</div>
</body>
</html>
```
FILE: styles.css
```
* { box-sizing: border-box; }
body { margin: 0; background: #fff; color: #444; font: 15px/20px "Open Sans", sans-serif; overflow: hidden; }
p { margin: 0; }
svg { display: block; flex: none; overflow: visible; }
.app { width: 1920px; height: 1080px; display: flex; flex-direction: column; }
.apps .app { width: 70px; height: 47px; flex-direction: row; }

/* little triangles */
.dd { display: inline-block; width: 8px; height: 4px; flex: none; background: #6b6b6b; clip-path: polygon(0 0, 100% 0, 50% 100%); }
.dd.dark { background: #333; width: 7px; }
.up, .down { display: block; width: 9px; height: 6px; background: #777; clip-path: polygon(0 100%, 50% 0, 100% 100%); }
.down { clip-path: polygon(0 0, 100% 0, 50% 100%); }
.left, .right { display: block; width: 5px; height: 9px; background: #6b6b6b; clip-path: polygon(0 50%, 100% 0, 100% 100%); }
.right { clip-path: polygon(0 0, 100% 50%, 0 100%); }
.glyph { font-family: "Open Sans", sans-serif; font-weight: 600; fill: #555; }
.glyph.pct { font-weight: 400; }
.logo { font-family: "Open Sans", sans-serif; font-weight: 700; fill: #fff; }

/* title bar */
.titlebar { height: 48px; position: relative; display: flex; align-items: center; }
.circuit { position: absolute; left: 1295px; top: 0; overflow: hidden; }
.quick { display: grid; grid-template-columns: 48px 49px 52px 53px 24px 34px 10px; align-items: center; padding: 0 0 6px 18px; width: 830px; }
.quick > :last-child { margin: 2px 0 0 1px; }
.doc-title { letter-spacing: -.15px; width: 820px; }
.win-buttons { position: relative; display: grid; grid-template-columns: 47px 52px 51px 52px 16px; align-items: center; padding-bottom: 6px; margin-left: 34px; }
.win-buttons svg:nth-child(3) { margin-top: 10px; }
.help { font-size: 22px; font-weight: 700; color: #6b6b6b; }

/* ribbon tabs */
.tabs { height: 37px; display: flex; position: relative; border-bottom: 1px solid #d4d4d4; letter-spacing: -.42px; }
.tab { line-height: 37px; white-space: nowrap; }
.file { width: 81px; background: #217346; color: #fff; padding-left: 27px; height: 37px; margin-right: 4px; letter-spacing: -.6px; }
.active { width: 74px; height: 37px; border: 1px solid #d4d4d4; border-bottom: 0; background: #fff; color: #217346; text-align: center; line-height: 35px; margin-right: 17px; letter-spacing: -.6px; padding-right: 2px; }
.t-insert { width: 81px; }
.t-page { width: 127px; }
.t-form { width: 108px; letter-spacing: -.55px; }
.t-data { width: 72px; letter-spacing: -.3px; }
.t-rev { width: 85px; }
.t-view { width: 68px; }
.t-add { width: 94px; }
.t-abbyy { letter-spacing: -.36px; }
.account { display: flex; align-items: flex-start; margin-left: auto; padding-right: 14px; letter-spacing: -.15px; }
.account span { line-height: 28px; }
.account .dd { margin: 12px 7px 0 6px; width: 7px; }
.smile { margin: 6px 0 0 31px; }

/* ribbon */
.ribbon { height: 144px; display: flex; position: relative; border-bottom: 1px solid #d4d4d4; letter-spacing: -.36px; }
.group { display: flex; flex-direction: column; padding-right: 1px; background: linear-gradient(#e1e1e1, #e1e1e1) right 4px / 1px 135px no-repeat; }
.g-clip { width: 132px; }
.g-font { width: 327px; }
.g-align { width: 440px; }
.g-num { width: 273px; }
.g-styles { width: 241px; }
.g-cells { width: 203px; }
.g-edit { width: 194px; }
.body { height: 120px; display: flex; }
.label { display: flex; height: 23px; align-items: center; padding-top: 3px; }
.lt { flex: 1; text-align: center; font-size: 13px; letter-spacing: -.25px; color: #666; padding-right: 1px; }
.launch { margin: 2px 9px 0 0; }
.big { display: flex; flex-direction: column; align-items: center; padding-top: 16px; white-space: nowrap; }
.big > svg { height: 46px; }
.big hr { border: 0; width: 48px; height: 1px; background: #e1e1e1; margin: 6px 0 2px; }
.big hr.none { background: none; }
.big > .dd { margin-top: 8px; width: 7px; }
.big span .dd { margin-left: 5px; width: 7px; vertical-align: 3px; }
.paste { width: 79px; }
.paste svg { margin-left: 7px; }
.paste span { margin-right: 3px; }
.paste > .dd { margin-right: 1px; }
.tri-rows { display: grid; grid-template-rows: 38px 38px 38px; padding-top: 6px; }
.tri-rows div { display: flex; align-items: center; padding-left: 5px; }
.tri-rows .copy { padding-left: 3px; }
.tri-rows .dd { margin-left: 10px; width: 7px; }
.rows { flex-direction: column; gap: 17px; padding-top: 22px; }
.row1, .row2 { height: 33px; display: grid; align-items: center; white-space: nowrap; }
.row2 > span:not(.tg) { padding-bottom: 2px; }
.combo { height: 33px; border: 1px solid #ababab; background: #fff; color: #000; display: flex; align-items: center; justify-content: space-between; padding: 0 4px 2px 2px; letter-spacing: -.1px; overflow: hidden; }
.fn { width: 129px; overflow: hidden; }
.g-font .row1 { grid-template-columns: 148px 75px 52px 20px; padding-left: 8px; }
.c-name { width: 149px; position: relative; letter-spacing: -.25px; }
.c-name .dd { width: 6px; }
.c-size { width: 60px; padding-left: 3px; letter-spacing: -.5px; }
.g-font .row2 { grid-template-columns: 51px 47px 27px 22px 30px 21px 31px 21px 31px 8px; padding-left: 25px; }
.g-font .row2 svg, .g-font .row2 .dd { margin-left: 1px; }
.g-font .row2 .dd { width: 7px; }
.row2 > .fb, .row2 > .fi, .row2 > .fu { font-size: 22px; line-height: 31px; color: #444; padding-bottom: 2px; }
.row2 > .fi { font-family: "Liberation Serif", serif; font-weight: 700; font-size: 26px; padding-left: 2px; }
.row2 > .fu { font-weight: 600; font-size: 20px; text-decoration: underline; text-underline-offset: 3px; text-decoration-thickness: 1px; padding-left: 1px; }
.tg { width: 51px; height: 33px; display: flex; align-items: center; justify-content: center; padding: 0 2px 2px 0; }
.on.tg, .wrap { background: #9fd5b7; }
.g-align .row1 { grid-template-columns: 51px 51px 66px 24px 63px 128px; padding-left: 8px; }
.wrap { height: 33px; display: flex; align-items: center; gap: 5px; padding: 0 0 2px 14px; }
.g-align .row2 { grid-template-columns: 51px 51px 51px 51px 61px 29px 118px 8px; padding-left: 8px; }
.row1 > .dd, .row2 > .dd { width: 7px; }
.g-num .row1, .g-num .row2 { padding-left: 8px; }
.c-num { width: 256px; }
.c-num .dd { width: 7px; }
.g-num .row2 { grid-template-columns: 31px 25px 57px 44px 51px 23px; padding-left: 18px; }
.g-num .row2 svg:nth-of-type(3) { margin-top: -4px; }
.dec { font: 13px "Open Sans", sans-serif; fill: #444; letter-spacing: -.2px; }
.g-styles .body { padding-left: 8px; }
.w-cond { width: 88px; } .w-fmt { width: 76px; } .w-cell { width: 57px; }
.w-fmt svg { margin-left: 4px; } .w-cell svg { margin-left: 4px; }
.w-cond svg { margin-left: 4px; }
.g-cells .body { padding-left: 8px; }
.w-ins, .w-del, .w-form { width: 62px; }
.w-ins svg { margin-right: 1px; }
.w-form { padding-right: 1px; }
.w-form svg { margin-top: -1px; margin-bottom: 1px; }
.edit { width: 60px; padding-left: 16px; }
.edit .dd { margin-left: 5px; }
.edit .dd.sum { margin-left: 10px; }
.w-sort { width: 60px; } .w-find { width: 66px; }
.w-sort svg { margin-left: 5px; }
.az { font-family: "Open Sans", sans-serif; font-weight: 600; }
.a { fill: #4079b8; } .z { fill: #9668b7; font-weight: 400; }
.edit + .w-sort { margin-left: 1px; }
.collapse { margin: 129px 0 0 80px; }

/* formula bar */
.formula { height: 98px; display: flex; padding: 10px 5px 0; align-items: flex-start; }
.namebox { width: 128px; height: 30px; border: 1px solid #c6c6c6; display: flex; align-items: center; justify-content: space-between; padding: 0 7px; font-size: 15px; }
.vdots { margin: 9px 0 0 17px; }
.fxbox { width: 138px; height: 30px; border: 1px solid #c6c6c6; margin: 0 2px 0 18px; display: grid; grid-template-columns: 45px 45px 30px; align-items: center; padding-left: 14px; }
.fx { font: italic 700 25px/26px "Liberation Serif", serif; color: #777; margin-top: -3px; }
.fx .x { font-size: 20px; }
.fbox { flex: 1; height: 78px; border: 1px solid #c6c6c6; display: flex; justify-content: space-between; font-size: 15.6px; letter-spacing: .1px; }
.ftext { padding: 2px 0 0 12px; width: 1546px; }
.ftext p { display: flex; justify-content: space-between; height: 24px; line-height: 24px; white-space: nowrap; }
.f0 { margin-left: 4px; letter-spacing: .2px; }
.f1 { margin-right: 10px; letter-spacing: .13px; } .f2 { margin-right: 9px; letter-spacing: .08px; } .f3 { margin-right: 6px; letter-spacing: .15px; }
.fside { width: 18px; margin-right: 1px; display: flex; flex-direction: column; align-items: center; padding-top: 10px; }
.mini { width: 18px; margin-top: 7px; }
.mini span { display: flex; align-items: center; justify-content: center; height: 19px; border: 1px solid #ababab; }
.mini .th { height: 10px; }

/* worksheet */
.sheet { height: 636px; display: flex; }
.grid { width: 1895px; font: 16px/20px "Liberation Sans", sans-serif; border-right: 1px solid #ababab; overflow: hidden; border-bottom: 1px solid #ababab; }
.r { display: grid; grid-template-columns: 35px 130px 1081px repeat(8, 80px) 8px; }
.r i, .cell, .r b { font-style: normal; border-right: 1px solid #d4d4d4; border-bottom: 1px solid #d4d4d4; }
.r b { font-weight: 400; border-right-color: #ababab; display: flex; align-items: flex-end; justify-content: center; }
.r i:last-child { border-right: 0; }
.head { height: 22px; }
.head i { border-bottom-color: #ababab; text-align: center; line-height: 23px; height: 22px; }
.head b.corner { border-right-color: #d4d4d4; align-items: center; justify-content: flex-end; padding-right: 3px; }
.head i.sel { background: #e1e1e1; border-bottom: 2px solid #217346; color: #217346; font-weight: 700; box-shadow: -1px 0 #ababab; }
.r b.sel { background: #e1e1e1; color: #217346; font-weight: 700; border-right: 2px solid #217346; padding-left: 1px; }
.r3 { height: 108px; } .r4 { height: 52px; } .r5 { height: 345px; } .r6 { height: 78px; } .r7 { height: 22px; } .r8 { height: 9px; }
.r8 b { align-items: flex-start; overflow: hidden; }
.r8 i, .r8 b { border-bottom: 0; height: 9px; }
.title { font-size: 23.2px; letter-spacing: -.15px; line-height: 26px; font-weight: 700; color: #000; display: flex; align-items: flex-end; justify-content: center; padding-left: 1px; }
.sys { font-size: 30.5px; letter-spacing: -.27px; line-height: 36px; color: #000; text-align: center; padding-top: 21px; }
.cell.task { position: relative; color: #000; font-size: 23.5px; letter-spacing: -.28px; line-height: 29px; padding: 28px 0 0 4px; white-space: nowrap; }
.task p { display: flex; height: 29px; }
.task .l1 { letter-spacing: -.225px; }
.task .l2 { letter-spacing: -.38px; }
.task .l3 { letter-spacing: -.2px; }
.task .l4 { letter-spacing: -.25px; }
.task .l5 { letter-spacing: -.31px; }
.task .ind { padding-left: 6px; }
.task p span { flex: 1; }
.task p .n1 { flex: none; width: 67px; } .task p .n2 { flex: none; width: 58px; }
.selection { position: absolute; inset: -2px -2px -2px -2px; border: 2px solid #217346; }
.handle { position: absolute; right: -3px; bottom: -3px; width: 7px; height: 7px; background: #217346; border: 1px solid #fff; border-width: 1px 0 0 1px; }
.bk.bk { border-bottom-color: #000; }
.bkr.bkr { border-right-color: #000; }
.btn { width: 18px; height: 19px; border: 1px solid #c6c6c6; background: #fff; display: flex; align-items: center; justify-content: center; }
.vscroll { width: 25px; padding: 2px 4px 0 3px; display: flex; flex-direction: column; background: linear-gradient(#f1f1f1, #f1f1f1) 3px 2px / 18px 634px no-repeat; }
.vthumb { margin: 60px 0 90px; height: 447px; width: 18px; border: 1px solid #ababab; background: #fff; }

/* sheet tabs */
.sheetbar { height: 29px; background: #f5f5f5; display: flex; align-items: flex-start; font-size: 16px; line-height: 24px; white-space: nowrap; }
.nav { width: 103px; padding: 10px 0 0 28px; display: flex; gap: 24px; }
.nav i { background: #c2c2c2; height: 9px; }
.st { height: 26px; }
.st.on { width: 160px; background: #fff; border: 1px solid #ababab; border-width: 0 1px 2px; border-bottom-color: #217346; color: #217346; font-weight: 700; text-align: center; letter-spacing: -.22px; line-height: 22px; padding-right: 1px; }
.s2, .s3 { margin-top: 3px; height: 22px; line-height: 16px; border-right: 1px solid #ababab; padding-left: 14px; letter-spacing: .15px; }
.s2 { width: 176px; } .s3 { width: 93px; padding-left: 15px; letter-spacing: -.2px; }
.plus { margin: 4px 0 0 32px; }
.hd { margin: 8px 0 0 564px; }
.hscroll { margin: 5px 0 0 16px; width: 728px; display: flex; background: #e8e8e8; }
.hthumb { width: 622px; border: 1px solid #ababab; background: #fff; margin-right: auto; }

/* status bar */
.status { height: 40px; background: #217346; color: #fff; font-size: 12.5px; display: flex; align-items: center; padding-left: 14px; }
.views { display: flex; margin-left: auto; height: 39px; }
.v { width: 51px; display: flex; align-items: center; justify-content: center; }
.v.on { background: #0b6433; }
.zoom { margin-left: 5px; }
.pc { width: 67px; padding: 1px 0 0 21px; }
.ready { letter-spacing: -.1px; padding-top: 1px; }

/* taskbar */
.taskbar { height: 48px; background: linear-gradient(180deg, #1f6480 0, #257793 3px, #24708d 60%, #236a88 100%); display: flex; color: #fff; }
.start { margin: 7px 0 0 14px; }
.grip { width: 12px; height: 38px; margin: 6px 0 0 13px; background: radial-gradient(circle at 2px 2px, #0d3340 1.300px, transparent 1.600px) 0 0 / 4px 7px; }
.apps { display: flex; gap: 3px; margin: 1px 0 0 9px; }
.apps .app { display: flex; align-items: center; justify-content: center; padding: 0 1px 2px 0; }
.run { border: 1px solid #7fabbe; background: #4d899f; box-shadow: 0 0 0 1px #1c5a73; }
.cur { border-color: #e6eff2; background: linear-gradient(#7ba3b3, #93b4c0); }
.g2 { margin-left: 521px; }
.kbd { margin: 13px 0 0 50px; }
.qm { margin: 12px 0 0 60px; }
.traytri { width: 10px; height: 5px; background: #fff; clip-path: polygon(0 100%, 50% 0, 100% 100%); margin: 22px 0 0 14px; }
.lang { margin: 14px 0 0 19px; letter-spacing: -.6px; width: 27px; }
.clock { margin-left: 20px; width: 72px; display: flex; flex-direction: column; align-items: center; line-height: 22px; padding-top: 3px; letter-spacing: -.65px; }
```
